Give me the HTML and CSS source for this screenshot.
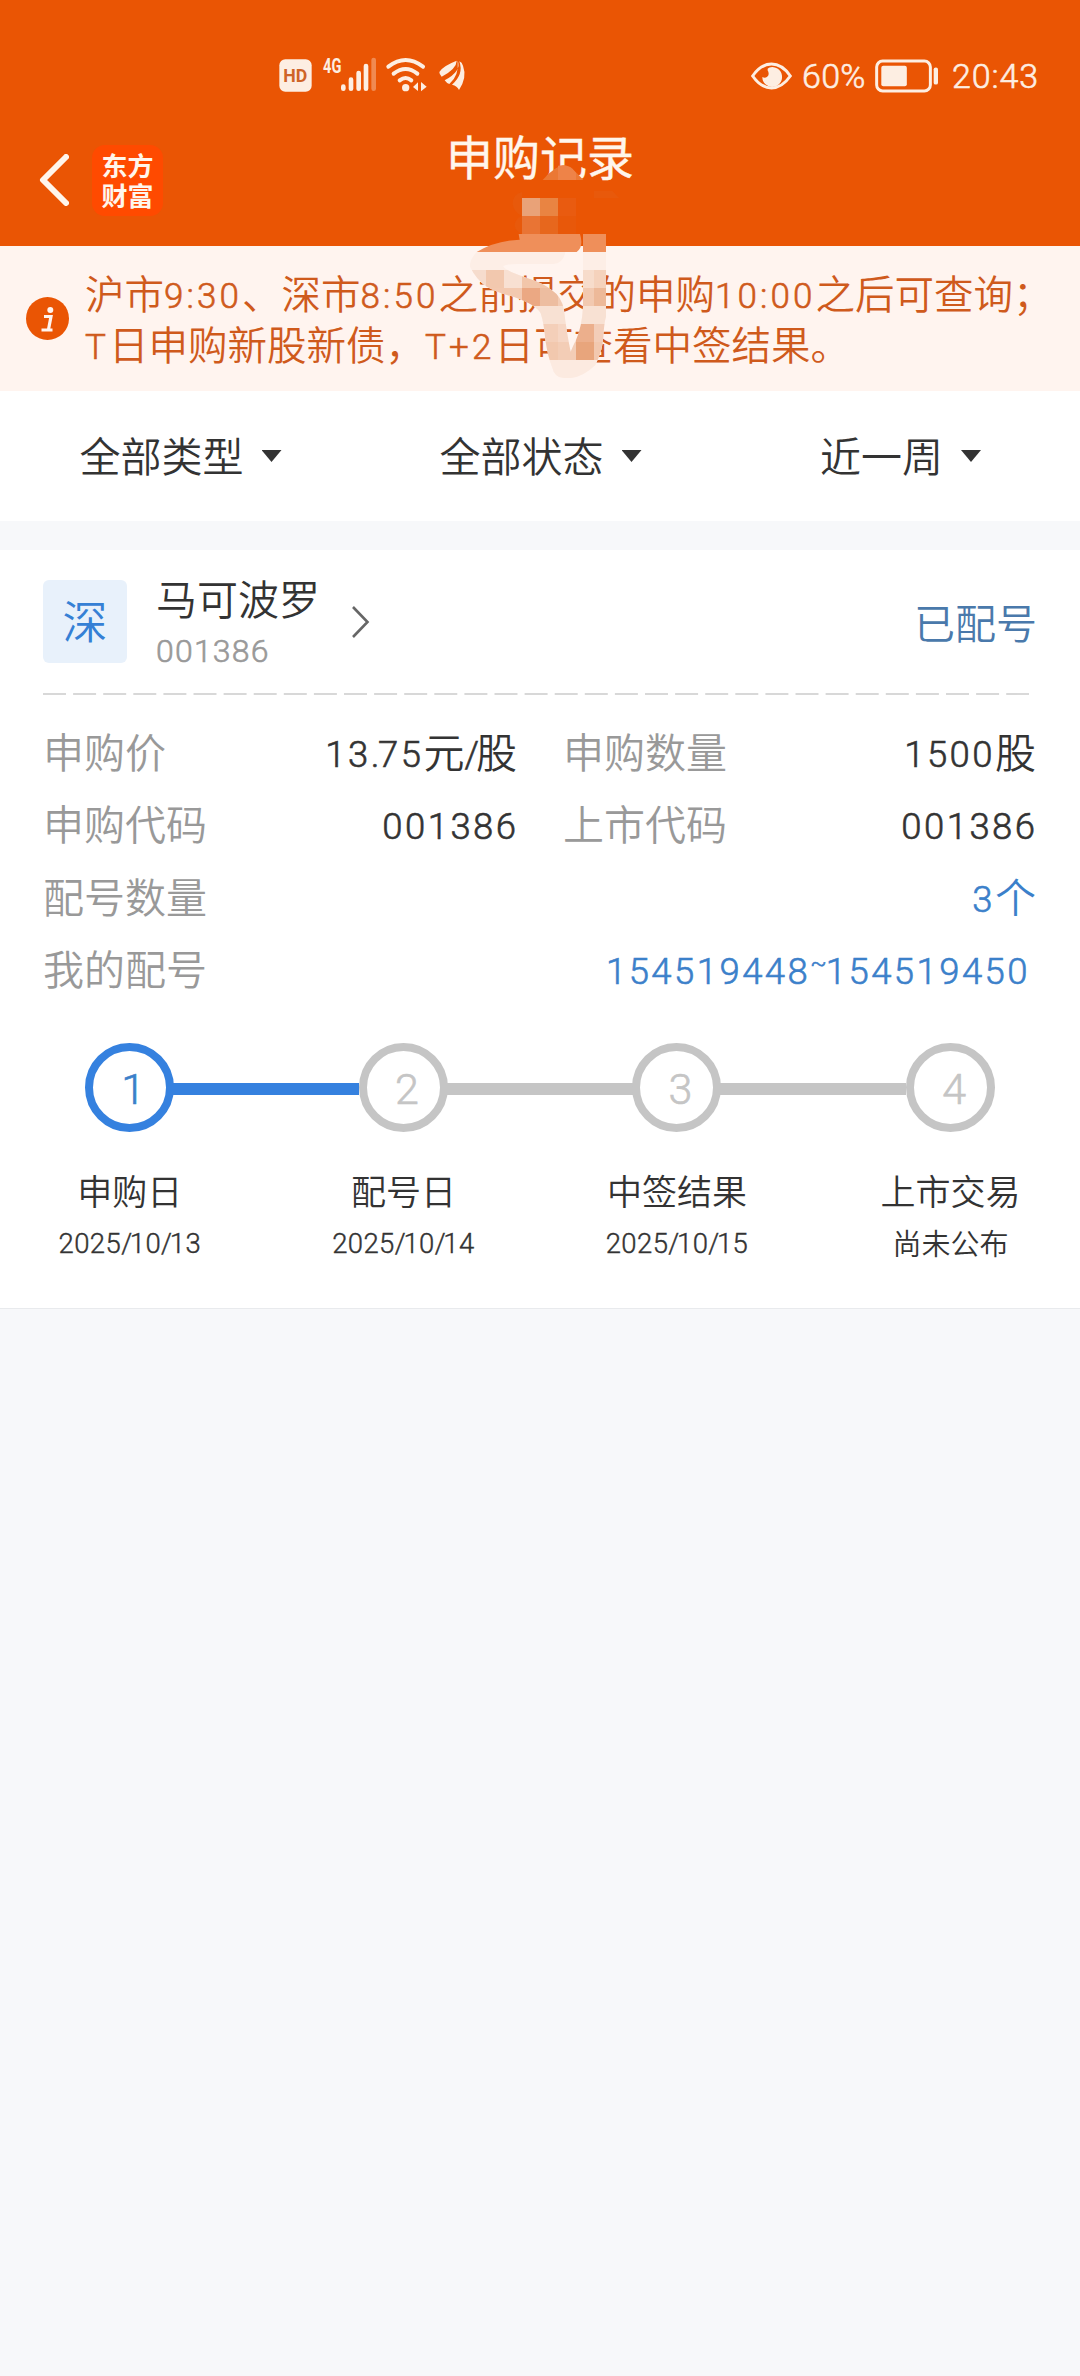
FILE: index.html
```html
<!DOCTYPE html>
<html lang="zh-CN">
<head>
<meta charset="utf-8">
<title>申购记录</title>
<link rel="stylesheet" href="styles.css">
</head>
<body>
<header class="header">
  <div class="status">
    <svg class="status-left" viewBox="0 0 690 210" width="230" height="70" fill="#fdeee2">
      <rect x="58" y="58" width="97" height="97" rx="18"/>
      <text class="hd" x="106" y="127" text-anchor="middle" textLength="72" lengthAdjust="spacingAndGlyphs">HD</text>
      <text class="net" x="189" y="98" textLength="55" lengthAdjust="spacingAndGlyphs">4G</text>
      <g stroke="#fdeee2" stroke-width="14" stroke-linecap="round">
        <path d="M250 140v6M273 119v27M296 99v47M318 78v68"/>
        <path d="M341 60v86" opacity=".35"/>
      </g>
      <g fill="none" stroke="#fdeee2" stroke-width="12" stroke-linecap="round">
        <path d="M385 80Q437 40 489 80"/><path d="M401 101Q437 73 472 101"/><path d="M419 121Q437 107 454 121"/>
      </g>
      <circle cx="437" cy="143" r="11"/>
      <path d="M459 141l15-14v26zM483 126l17 14-17 14z"/>
      <path d="M538 96Q548 78 590 62Q590 86 545 110Q538 104 538 96zM593 62Q606 92 554 121Q560 130 568 132Q598 106 593 62zM598 64Q612 103 576 134Q592 138 597 150Q622 112 609 77Q606 67 598 64z"/>
    </svg>
    <div class="status-right">
      <svg viewBox="0 0 124 84" width="41" height="28">
        <path d="M5 42Q30 6 62 6T119 42Q94 78 62 78T5 42z" fill="none" stroke="#fdeee2" stroke-width="9"/>
        <path d="M56 16A30 30 0 1 1 34 45Q42 49 48 45Q58 38 50 24Q49 18 56 16z" fill="#fdeee2"/>
      </svg>
      <span class="pct">60%</span>
      <svg class="battery" viewBox="0 0 190 102" width="63" height="34">
        <rect x="5" y="6" width="162" height="90" rx="18" fill="none" stroke="#fdeee2" stroke-width="9"/>
        <rect x="19" y="20" width="77" height="62" rx="6" fill="#fdeee2"/>
        <rect x="177" y="25" width="13" height="52" rx="6" fill="#fdeee2"/>
      </svg>
      <span class="clock">20:43</span>
    </div>
  </div>
  <nav class="nav">
    <div class="nav-left">
      <svg viewBox="0 0 30 52" width="30" height="52"><path d="M27 3L4 26L27 49" fill="none" stroke="#fff6ec" stroke-width="6" stroke-linecap="round" stroke-linejoin="round"/></svg>
      <div class="logo"><span>东方</span><span>财富</span></div>
    </div>
    <h1 class="title">申购记录</h1>
  </nav>
  <svg class="smudge" viewBox="0 0 720 810" width="240" height="270">
    <defs>
      <clipPath id="trail"><path d="M170 396Q148 420 150 440Q170 480 200 500Q230 517 282 531Q350 555 362 580Q372 610 376 660Q384 712 396 740Q404 774 432 774H452Q490 770 526 735Q548 690 550 650Q552 610 558 590V396H489V560Q486 620 468 660Q458 680 452 695Q440 640 432 570Q425 530 395 510Q370 490 330 477Q250 450 250 438Q262 431 300 432H400Q430 430 436 396Z"/></clipPath>
    </defs>
    <path d="M368 180H490Q450 136 432 136Q405 138 368 180z" fill="#eb7834"/>
    <path d="M414 137Q450 130 468 158V180H414z" fill="#ee8348"/>
    <path d="M306 216Q278 222 278 252Q282 278 306 288Q284 296 284 318Q288 336 306 342z" fill="#e8590b"/>
    <path d="M306 234h54v54h-54z" fill="#e9a278"/><path d="M360 234h54v54h-54z" fill="#e98442"/>
    <path d="M414 234h54v54h-54z" fill="#e95b10"/><path d="M306 288h54v54h-54z" fill="#e97434"/>
    <path d="M360 288h54v54h-54z" fill="#e7671d"/><path d="M414 288h54v54h-54z" fill="#e8580a"/>
    <path d="M522 212h54l22 22h-76z" fill="#e8590b"/>
    <path d="M170 396Q226 362 299 359L296 342H480Q492 380 470 396zM489 342H558V396H489z" fill="#ef8f5a"/>
    <g clip-path="url(#trail)">
      <path d="M144 396h414v378H144z" fill="#fdeee6"/>
      <path d="M144 450h54v54h-54z" fill="#f6dccd"/><path d="M198 450h54v54h-54z" fill="#f2c8ae"/><path d="M252 450h54v54h-54z" fill="#f8e0d2"/><path d="M306 450h108v54H306z" fill="#f2c6aa"/><path d="M489 450h33v54h-33z" fill="#f7dccb"/><path d="M522 450h36v54h-36z" fill="#f5d2bc"/>
      <path d="M198 504h108v54H198z" fill="#f3c9b0"/><path d="M306 504h54v54h-54z" fill="#eba883"/><path d="M360 504h54v54h-54z" fill="#edbda0"/><path d="M414 504h54v54h-54z" fill="#f3cdb6"/><path d="M480 504h42v54h-42z" fill="#f2c9b0"/><path d="M522 504h36v54h-36z" fill="#edb999"/>
      <path d="M340 558h218v54H340z" fill="#f8e1d3"/>
      <path d="M360 612h54v54h-54z" fill="#f4cfb9"/><path d="M414 612h54v54h-54z" fill="#f6d6c4"/><path d="M468 612h54v54h-54z" fill="#ecaf8c"/><path d="M522 612h36v54h-36z" fill="#f3cdb8"/>
      <path d="M360 666h54v54h-54z" fill="#f2c8ae"/><path d="M414 666h54v54h-54z" fill="#f3cdb6"/><path d="M468 666h54v54h-54z" fill="#e8a57c"/><path d="M522 666h36v54h-36z" fill="#f2c8af"/>
      <path d="M360 720h198v54H360z" fill="#fceae0"/>
    </g>
  </svg>
</header>

<section class="notice">
  <svg class="info" viewBox="0 0 43 43" width="43" height="43">
    <circle cx="21.500" cy="21.500" r="21.500" fill="#ea5504"/>
    <circle cx="24.300" cy="13" r="3" fill="#fff4ef"/>
    <path d="M18 19.500h7l-2.500 13M15.500 33h11" fill="none" stroke="#fff4ef" stroke-width="3.200"/>
  </svg>
  <p class="notice-text">沪市<span class="num">9:30</span>、深市<span class="num">8:50</span>之前提交的申购<span class="num">10:00</span>之后可查询；<br><span class="num">T</span>日申购新股新债，<span class="num">T+2</span>日可查看中签结果。</p>
</section>

<section class="filters">
  <div class="filter"><span>全部类型</span><i class="caret"></i></div>
  <div class="filter"><span>全部状态</span><i class="caret"></i></div>
  <div class="filter"><span>近一周</span><i class="caret"></i></div>
</section>

<main class="card">
  <div class="stock">
    <div class="market">深</div>
    <div class="stock-id">
      <div class="name">马可波罗</div>
      <div class="code">001386</div>
    </div>
    <svg class="chevron" viewBox="0 0 19 34" width="19" height="34"><path d="M2 2L16.500 17L2 32" fill="none" stroke="#666" stroke-width="2.600"/></svg>
    <div class="state">已配号</div>
  </div>
  <svg class="divider" width="986" height="2"><path d="M0 1H986" stroke="#ccc" stroke-width="1.500" stroke-dasharray="23 7.100"/></svg>
  <div class="rows">
    <div class="cell"><span class="label">申购价</span><span class="value"><span class="num">13<span class="dot">.</span>75</span>元<span class="num slash">/</span>股</span></div>
    <div class="cell"><span class="label">申购数量</span><span class="value"><span class="num">1500</span>股</span></div>
    <div class="cell"><span class="label">申购代码</span><span class="value"><span class="num end">001386</span></span></div>
    <div class="cell"><span class="label">上市代码</span><span class="value"><span class="num end">001386</span></span></div>
    <div class="cell wide"><span class="label">配号数量</span><span class="value link"><span class="num">3</span>个</span></div>
    <div class="cell wide"><span class="label">我的配号</span><span class="value link range"><span class="num">154519448<span class="tilde">~</span>154519450</span></span></div>
  </div>
  <ol class="steps">
    <li class="step active"><div class="track"><span class="ring">1</span></div><div class="step-name">申购日</div><div class="date">2025<span class="sep">/</span>10<span class="sep">/</span>13</div></li>
    <li class="step"><div class="track"><span class="ring">2</span></div><div class="step-name">配号日</div><div class="date">2025<span class="sep">/</span>10<span class="sep">/</span>14</div></li>
    <li class="step"><div class="track"><span class="ring">3</span></div><div class="step-name">中签结果</div><div class="date">2025<span class="sep">/</span>10<span class="sep">/</span>15</div></li>
    <li class="step"><div class="track"><span class="ring">4</span></div><div class="step-name">上市交易</div><div class="date cjk">尚未公布</div></li>
  </ol>
</main>
</body>
</html>
```
FILE: styles.css
```css
* { box-sizing: border-box; }
body {
  margin: 0;
  min-height: 2376px;
  background: #f7f8fa;
  color: #333;
  font-family: "Noto Sans CJK SC", sans-serif;
  font-weight: 350;
  font-size: 41px;
}
.num, .code, .date, .ring, .pct, .clock { font-family: Roboto, "Noto Sans CJK SC", sans-serif; font-weight: 350; -webkit-text-stroke: .6px currentColor; }
.num { font-size: 36.5px; line-height: 1; letter-spacing: 2.450px; vertical-align: 1.500px; }
.num.end { margin-right: -1.500px; }
.dot { letter-spacing: -1.300px; }
.slash { letter-spacing: -3px; }

.header { position: relative; height: 246px; background: #ea5504; }
.status { display: flex; justify-content: space-between; padding: 40px 41px 0 260px; height: 110px; }
.status-left { display: block; }
.hd { font: 700 56px Roboto, sans-serif; fill: #cf6428; }
.net { font: 700 58px Roboto, sans-serif; }
.status-right { display: flex; align-items: center; height: 71px; color: #fdeee2; font-size: 34px; line-height: 40px; }
.pct { margin-left: 10px; width: 67px; letter-spacing: .3px; }
.battery { margin-left: 6px; }
.clock { margin-left: 14px; width: 87px; letter-spacing: .9px; }
.nav { display: grid; grid-template-columns: 1fr auto 1fr; height: 136px; }
.nav-left { display: flex; align-items: center; gap: 23px; padding-left: 39px; height: 140px; }
.logo {
  display: flex; flex-direction: column; align-items: center; justify-content: center;
  width: 71px; height: 71px; border-radius: 13px; background: #ff4a00;
  color: #fff6ec; font-size: 26px; font-weight: 700; line-height: 30px;
}
.title { margin: 10px 0 0; height: 70px; line-height: 70px; font-size: 47px; font-weight: 400; color: #fff6ec; -webkit-text-stroke: .4px currentColor; }
.smudge { position: absolute; left: 420px; top: 120px; }

.notice { display: flex; gap: 16px; height: 145px; padding: 20px 0 0 26px; background: #fff4ef; color: #cf5a1c; }
.info { margin-top: 31px; }
.notice-text { margin: 0; font-size: 39.500px; line-height: 51px; white-space: nowrap; }
.notice .num { font-size: 35px; letter-spacing: 3.100px; }

.filters { display: grid; grid-template-columns: repeat(3, 1fr); height: 130px; background: #fff; }
.filter { display: flex; align-items: center; justify-content: center; gap: 18px; line-height: 126px; padding-left: 1px; }
.filter span { height: 130px; }
.caret { width: 20px; height: 12px; background: #333; clip-path: polygon(0 0, 100% 0, 50% 100%); }

.card { margin-top: 29px; height: 759px; padding: 30px 45px 0 43px; background: #fff; border-bottom: 1px solid #e8eaed; }
.stock { display: flex; height: 113px; }
.market { width: 84px; height: 83px; border-radius: 6px; background: #e8f1fb; color: #3580d5; font-size: 45px; line-height: 79px; text-align: center; }
.stock-id { margin-left: 29px; width: 161px; }
.name { height: 38px; line-height: 34px; white-space: nowrap; }
.code { margin-top: 14px; font-size: 32px; line-height: 38px; letter-spacing: 1.200px; color: #999; }
.chevron { margin: 25px 0 0 34px; }
.state { margin: 11px -2px 0 auto; height: 60px; line-height: 60px; color: #4a79ab; }
.divider { display: block; }
.rows { display: grid; grid-template-columns: 474px 473px; column-gap: 46px; grid-auto-rows: 72.400px; margin-top: 19px; margin-right: -2px; }
.cell { display: flex; justify-content: space-between; line-height: 72px; white-space: nowrap; }
.wide { grid-column: 1 / 3; }
.label { color: #999; }
.link { color: #3b80ca; }
.range { margin-right: 6px; }
.tilde { display: inline-block; width: 15.500px; font-size: 24px; line-height: 1; vertical-align: 13px; }

.steps { display: grid; grid-template-columns: repeat(4, 273.600px); margin: 39px 0 0 -50px; padding: 0; list-style: none; text-align: center; }
.track { position: relative; display: flex; justify-content: center; height: 89px; }
.ring { width: 89px; height: 89px; border: 8.500px solid #c5c5c5; border-radius: 50%; padding-left: 7px; line-height: 76px; font-size: 43px; color: #c5c5c5; }
.step:not(:last-child) .track::after { content: ""; position: absolute; left: 180px; top: 40px; width: 186px; height: 12px; background: #c5c5c5; }
.active .ring { border-color: #3581df; color: #3b7fca; }
.step.active .track::after { background: #3581df; }
.step-name { margin-top: 38px; height: 40px; line-height: 40px; font-size: 35px; }
.date { margin-top: 14px; height: 40px; line-height: 40px; font-size: 27.500px; letter-spacing: .4px; -webkit-text-stroke-width: .4px; }
.sep { letter-spacing: -2.300px; }
.date.cjk { font-family: "Noto Sans CJK SC", sans-serif; font-size: 29px; line-height: 36px; letter-spacing: 0; -webkit-text-stroke-width: 0; }
```
